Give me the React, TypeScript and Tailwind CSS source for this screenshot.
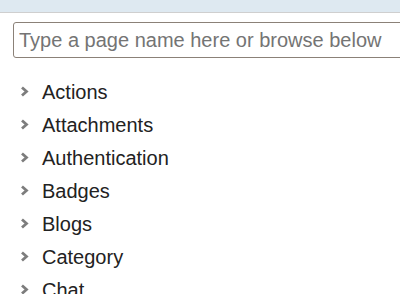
import React from "react";

const pages = ["Actions", "Attachments", "Authentication", "Badges", "Blogs", "Category", "Chat"];

function Chevron() {
  return (
    <svg width="9" height="11" viewBox="0 0 9 11" className="shrink-0">
      <path d="M2 1.5 L6.5 5.5 L2 9.5" fill="none" stroke="#7d7d7d" strokeWidth="2.8" />
    </svg>
  );
}

export default function App() {
  return (
    <div className="w-[400px] h-[294px] overflow-hidden bg-white font-['Liberation_Sans',Arial,sans-serif]">
      <div className="h-[13px] bg-[#dee9f1] border-b border-[#cfcfcf]" />
      <div className="pl-[13px] pt-[9px]">
        <div className="w-[420px] h-[36px] border border-[#8b8178] rounded-[3px] flex items-center pl-[5px]">
          <input
            className="w-full outline-none text-[20px] text-[#333] placeholder:text-[#747474] bg-transparent"
            placeholder="Type a page name here or browse below"
          />
        </div>
      </div>
      <ul className="mt-[17px]">
        {pages.map((p) => (
          <li key={p} className="h-[33px] flex items-center pl-[20px]">
            <Chevron />
            <span className="ml-[13px] text-[20px] text-[#222] leading-none">{p}</span>
          </li>
        ))}
      </ul>
    </div>
  );
}
